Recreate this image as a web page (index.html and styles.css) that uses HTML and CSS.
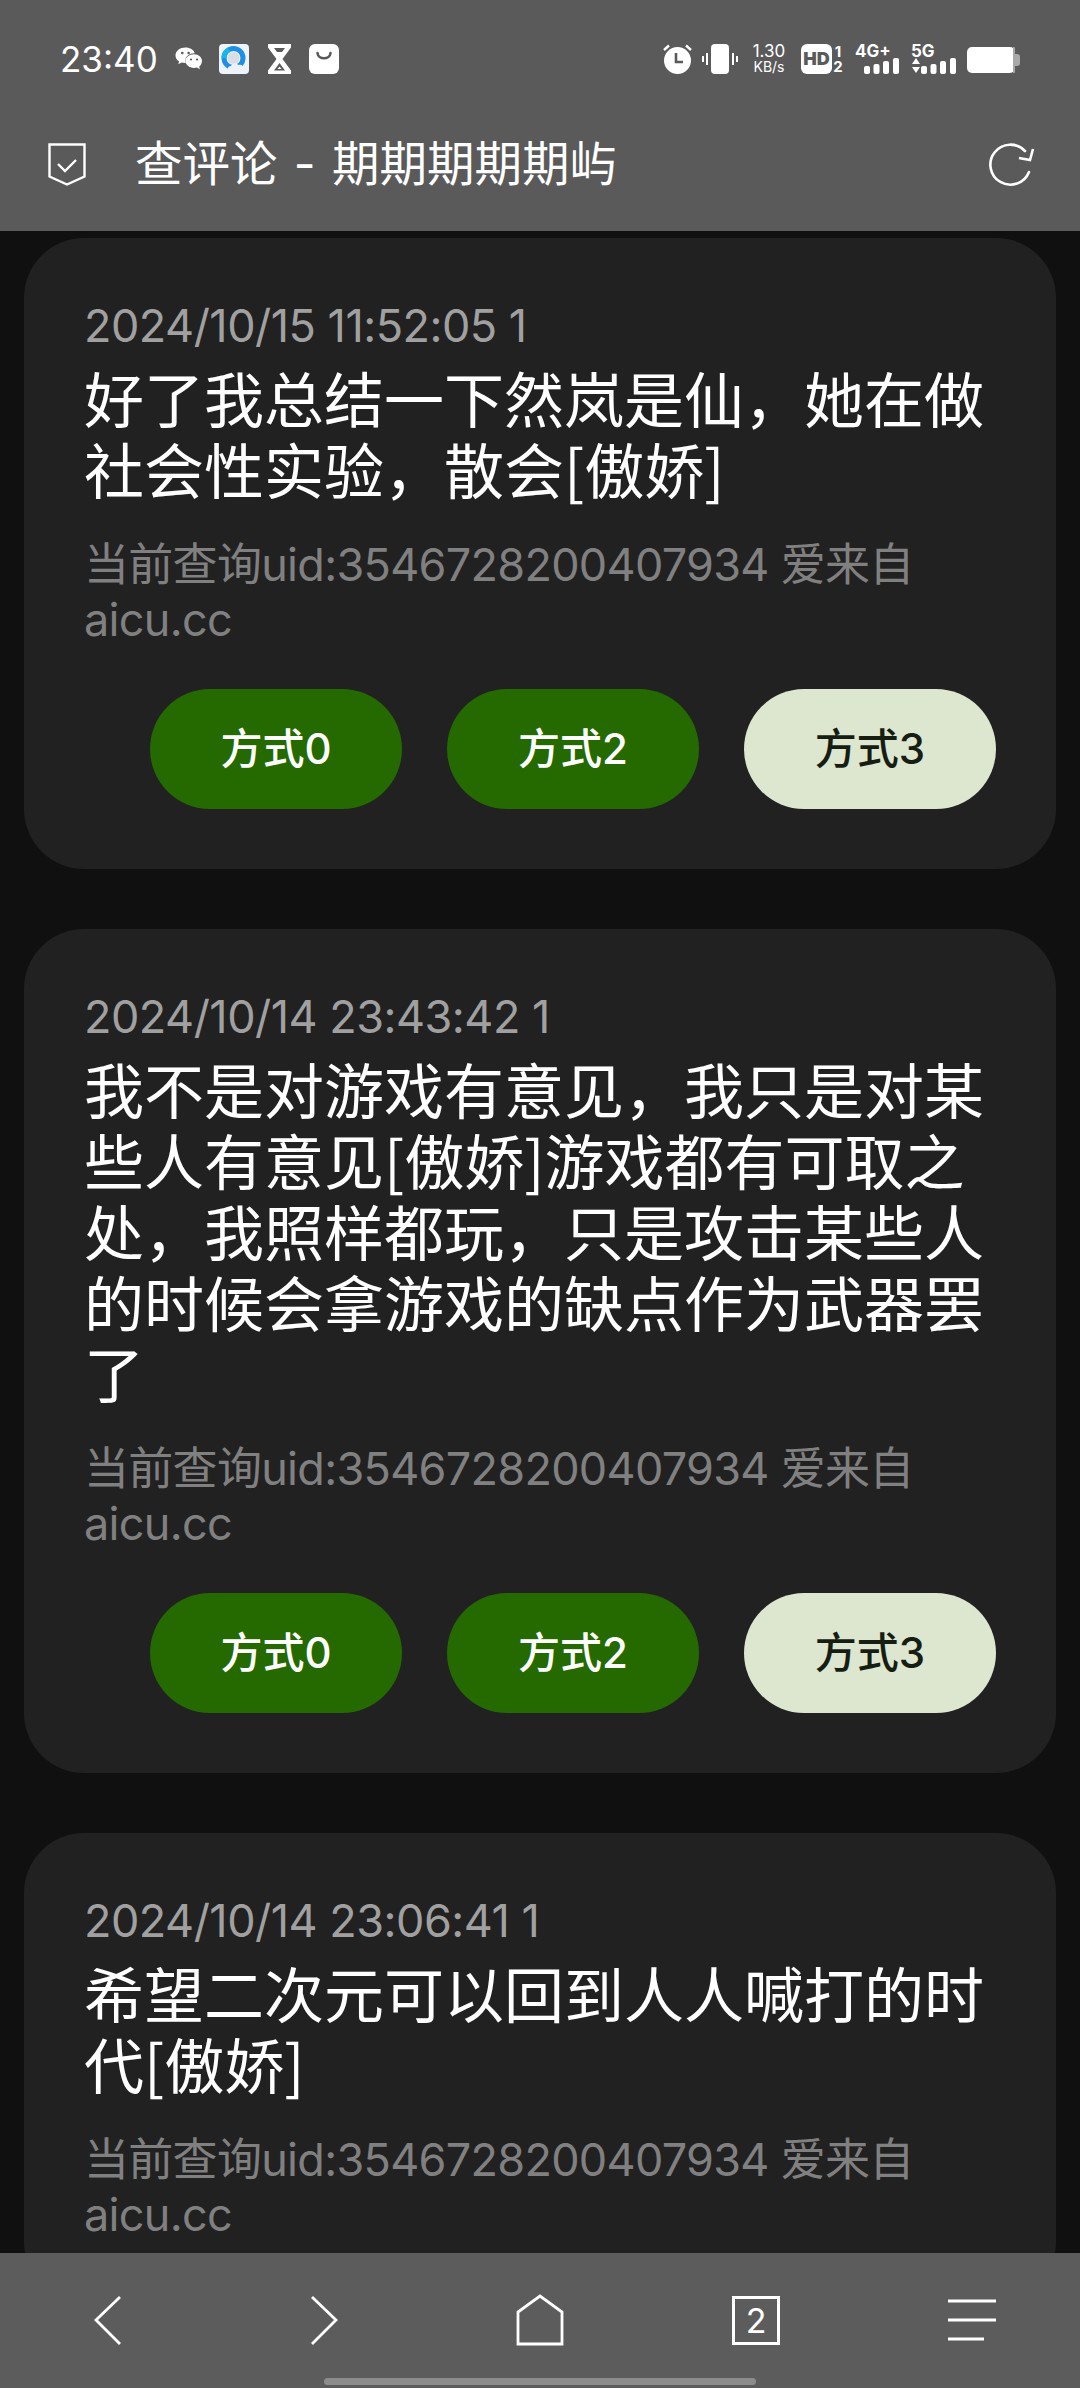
FILE: index.html
```html
<!DOCTYPE html>
<html lang="zh-CN">
<head>
<meta charset="utf-8">
<title>查评论</title>
<link rel="stylesheet" href="styles.css">
</head>
<body>
<div class="app">
  <header class="top">
    <div class="status">
      <span class="time">23:40</span>
      <div class="notif">
        <svg class="i-wechat" viewBox="0 0 28 24"><path fill="#fff" d="M10.500.5C4.900.5.500 4 .500 8.400c0 2.500 1.400 4.600 3.600 6.100l-.8 2.800 3.300-1.700c1.100.3 2.200.5 3.400.5h.7c-.3-.8-.4-1.500-.4-2.300 0-4.300 4-7.600 8.900-7.600h.5C18.900 2.800 15 .5 10.500.500z"/><path fill="#fff" d="M19 7.300c-4.700 0-8.600 3-8.600 6.800s3.900 6.800 8.600 6.800c1 0 2-.1 2.900-.4l3 1.700-.7-2.600c1.700-1.300 2.800-3.300 2.800-5.500 0-3.800-3.300-6.800-8-6.800z"/><circle cx="7.300" cy="6" r="1.300" fill="#5a5a5a"/><circle cx="13.600" cy="6" r="1.300" fill="#5a5a5a"/><circle cx="16" cy="12.500" r="1.100" fill="#5a5a5a"/><circle cx="22" cy="12.500" r="1.100" fill="#5a5a5a"/></svg>
        <svg class="i-qq" viewBox="0 0 30 30"><rect width="30" height="30" rx="4" fill="#eef4fb"/><circle cx="14.500" cy="14" r="6" fill="#d9dee6"/><circle cx="14.500" cy="14" r="9.500" fill="none" stroke="#1f8fe6" stroke-width="5"/><path d="M5 14a9.500 9.500 0 0 1 5-8.400" fill="none" stroke="#19b6e8" stroke-width="5"/><path fill="#eef2f8" d="M11 27c-3 0-3-5 1-5 1-3 6-4 7-1 3-1 6 1 5 3 3 0 3 3 1 3z"/></svg>
        <svg class="i-glass" viewBox="0 0 23 30"><path fill="#fff" d="M0 0h23v3.500L14.500 15 23 26.500V30H0v-3.500L8.500 15 0 3.500z"/><path fill="#5a5a5a" d="M6 4h11l-3 4H9zM11.500 19l5.500 7.500H6z"/><path fill="#fff" d="M11.500 22.500l2 2.500h-4z"/></svg>
        <svg class="i-bag" viewBox="0 0 30 30"><rect width="30" height="30" rx="6" fill="#fff"/><path d="M8.500 9c.5 7 12.500 7 13 0" fill="none" stroke="#5a5a5a" stroke-width="2.600" stroke-linecap="round"/></svg>
      </div>
      <div class="sys">
        <svg class="i-alarm" viewBox="0 0 29 30"><circle cx="14.500" cy="16.500" r="13.500" fill="#fff"/><path d="M13 9v9h7" fill="none" stroke="#5a5a5a" stroke-width="2.600"/><path d="M1 6l5-4.500M28 6l-5-4.500" stroke="#fff" stroke-width="2.400"/></svg>
        <svg class="i-vib" viewBox="0 0 36 30"><rect x="9" width="18" height="30" rx="4" fill="#fff"/><path d="M5 9v12M1 12v6M31 9v12M35 12v6" stroke="#fff" stroke-width="2"/></svg>
        <div class="speed"><span class="speed-a">1.30</span><span class="speed-b">KB/s</span></div>
        <div class="hd"><span class="hd-box">HD</span><div class="hd-nums"><span>1</span><span>2</span></div></div>
        <div class="sig sig-4g"><span class="sig-label">4G+</span><svg class="bars" viewBox="0 0 35 16"><rect y="8" width="6" height="8" rx="2" fill="#fff"/><rect x="9.500" y="6" width="6" height="10" rx="2" fill="#fff"/><rect x="19" y="3" width="6" height="13" rx="2" fill="#fff"/><rect x="29" width="6" height="16" rx="2" fill="#fff"/></svg></div>
        <div class="sig sig-5g"><span class="sig-label">5G</span><svg class="bars-5g" viewBox="0 0 45 16"><path fill="#fff" d="M5 0l4 6H1zM1 9h8l-4 6z"/><rect x="10" y="8" width="6" height="8" rx="2" fill="#fff"/><rect x="19.500" y="6" width="6" height="10" rx="2" fill="#fff"/><rect x="29" y="3" width="6" height="13" rx="2" fill="#fff"/><rect x="39" y="0" width="6" height="16" rx="2" fill="#fff"/></svg></div>
        <svg class="i-batt" viewBox="0 0 55 27"><rect x="1" width="48" height="26" rx="5" fill="#fff"/><path fill="#a8a8a8" d="M49 7h2c2 0 3 1 3 3v6c0 2-1 3-3 3h-2zM47 0h1c1 0 1 1 1 1v24s0 1-1 1h-1z"/></svg>
      </div>
    </div>
    <div class="toolbar">
      <svg class="i-shield" viewBox="0 0 38 44"><path d="M1.500 1.500h35v32L19 41.500 1.500 33.500z" fill="none" stroke="#fff" stroke-width="2.400"/><path d="M10 21l7 7 11-11" fill="none" stroke="#fff" stroke-width="2.400"/></svg>
      <h1 class="title">查评论 - 期期期期期屿</h1>
      <svg class="i-refresh" viewBox="0 0 46 44"><path d="M40 29A20 20 0 1 1 36 8" fill="none" stroke="#fff" stroke-width="2.600" stroke-linecap="round"/><path d="M30 15l11 2 3-11" fill="none" stroke="#fff" stroke-width="2.600"/></svg>
    </div>
  </header>

  <main class="list">
    <article class="card">
      <div class="date">2024/10/15 11:52:05 1</div>
      <div class="body">好了我总结一下然岚是仙，她在做社会性实验，散会[傲娇]</div>
      <div class="meta">当前查询uid:3546728200407934 爱来自aicu.cc</div>
      <div class="actions"><button class="btn">方式0</button><button class="btn">方式2</button><button class="btn btn-light">方式3</button></div>
    </article>
    <article class="card">
      <div class="date">2024/10/14 23:43:42 1</div>
      <div class="body">我不是对游戏有意见，我只是对某些人有意见[傲娇]游戏都有可取之处，我照样都玩，只是攻击某些人的时候会拿游戏的缺点作为武器罢了</div>
      <div class="meta">当前查询uid:3546728200407934 爱来自aicu.cc</div>
      <div class="actions"><button class="btn">方式0</button><button class="btn">方式2</button><button class="btn btn-light">方式3</button></div>
    </article>
    <article class="card">
      <div class="date">2024/10/14 23:06:41 1</div>
      <div class="body">希望二次元可以回到人人喊打的时代[傲娇]</div>
      <div class="meta">当前查询uid:3546728200407934 爱来自aicu.cc</div>
    </article>
  </main>

  <footer class="bottom">
    <nav class="nav">
      <svg class="nav-i" viewBox="0 0 48 52"><path d="M36 3L12 26l24 24" fill="none" stroke="#fff" stroke-width="2.800"/></svg>
      <svg class="nav-i" viewBox="0 0 48 52"><path d="M12 3l24 23-24 24" fill="none" stroke="#fff" stroke-width="2.800"/></svg>
      <svg class="nav-i" viewBox="0 0 48 52"><path d="M2 50V18L24 2l22 16v32z" fill="none" stroke="#fff" stroke-width="2.800"/></svg>
      <div class="tab-count">2</div>
      <svg class="nav-i" viewBox="0 0 48 52"><path d="M0 7h48M0 26h48M0 45h36" fill="none" stroke="#fff" stroke-width="3.200"/></svg>
    </nav>
    <div class="home-bar"></div>
  </footer>
</div>
</body>
</html>
```
FILE: styles.css
```css
* { box-sizing: border-box; }
html, body { margin: 0; padding: 0; }
body { width: 1080px; height: 2388px; overflow: hidden; background: #101010; font-family: Inter, "Noto Sans CJK SC", sans-serif; }
.app { display: flex; flex-direction: column; height: 2388px; }
svg { display: block; flex: none; }

.top { background: #5a5a5a; color: #fff; flex: none; }
.status { height: 100px; padding: 44px 59px 26px 60px; display: flex; align-items: center; }
.time { font-size: 35px; line-height: 30px; width: 115px; flex: none; }
.notif { display: flex; align-items: center; }
.i-wechat { width: 28px; height: 24px; }
.i-qq { width: 30px; height: 30px; margin-left: 16px; }
.i-glass { width: 23px; height: 30px; margin-left: 19px; }
.i-bag { width: 30px; height: 30px; margin-left: 18px; }

.sys { margin-left: auto; display: flex; align-items: center; height: 30px; }
.i-alarm { width: 29px; height: 30px; }
.i-vib { width: 36px; height: 30px; margin-left: 10px; }
.speed { width: 36px; margin-left: 13px; display: flex; flex-direction: column; align-items: center; line-height: 15px; }
.speed-a { font-size: 17px; }
.speed-b { font-size: 14px; }
.hd { margin-left: 14px; width: 42px; display: flex; align-items: center; gap: 1px; }
.hd-box { width: 31px; height: 30px; background: #fff; color: #5a5a5a; border-radius: 6px; font-size: 18px; font-weight: 900; line-height: 30px; text-align: center; }
.hd-nums { display: flex; flex-direction: column; align-items: center; font-size: 15px; font-weight: 700; line-height: 15px; width: 10px; }
.sig { height: 30px; font-weight: 700; }
.sig-label { display: block; font-size: 17px; line-height: 14px; }
.sig-4g { width: 44px; margin-left: 12px; }
.sig-5g { width: 45px; margin-left: 12px; }
.bars { width: 35px; height: 16px; margin-left: 9px; }
.bars-5g { width: 45px; height: 16px; }
.i-batt { width: 55px; height: 27px; margin: 3px 0 0 10px; }

.toolbar { height: 131px; display: flex; align-items: center; padding: 0 45px 2px 48px; }
.i-shield { width: 38px; height: 44px; }
.title { margin: 0 0 2px 49px; font-size: 47.500px; font-weight: 400; line-height: 60px; word-spacing: 3px; flex: 1; white-space: nowrap; }
.i-refresh { width: 46px; height: 44px; }

.list { flex: 1; min-height: 0; overflow: hidden; padding: 7px 24px 0; display: flex; flex-direction: column; gap: 60px; }
.card { flex: none; background: #212121; border-radius: 60px; padding: 60px; }
.date { color: #a0a0a0; font-size: 45px; line-height: 56px; letter-spacing: -0.500px; }
.body { color: #fff; font-size: 60px; line-height: 71px; margin-top: 7px; font-family: "Noto Sans CJK SC", sans-serif; }
.meta { color: #808080; font-size: 45px; line-height: 55px; margin-top: 34px; letter-spacing: -0.700px; }
.actions { display: flex; justify-content: flex-end; gap: 45px; margin-top: 42px; }
.btn { width: 252px; height: 120px; border: 0; padding: 0 0 8px; border-radius: 60px; background: #246a00; color: #fff; font-size: 42px; font-weight: 500; font-family: Inter, "Noto Sans CJK SC", sans-serif; }
.btn-light { background: #dde6cf; color: #161d12; }

.bottom { flex: none; height: 135px; background: #5c5c5c; display: flex; flex-direction: column; align-items: center; }
.nav { width: 100%; height: 52px; margin-top: 41px; display: grid; grid-template-columns: repeat(5, 216px); justify-items: center; align-items: center; }
.nav-i { width: 48px; height: 52px; }
.tab-count { width: 48px; height: 49px; border: 3px solid #fff; color: #fff; font-size: 34px; line-height: 43px; text-align: center; }
.home-bar { width: 432px; height: 7px; margin-top: 32px; border-radius: 4px; background: #8c8c8c; }
```
